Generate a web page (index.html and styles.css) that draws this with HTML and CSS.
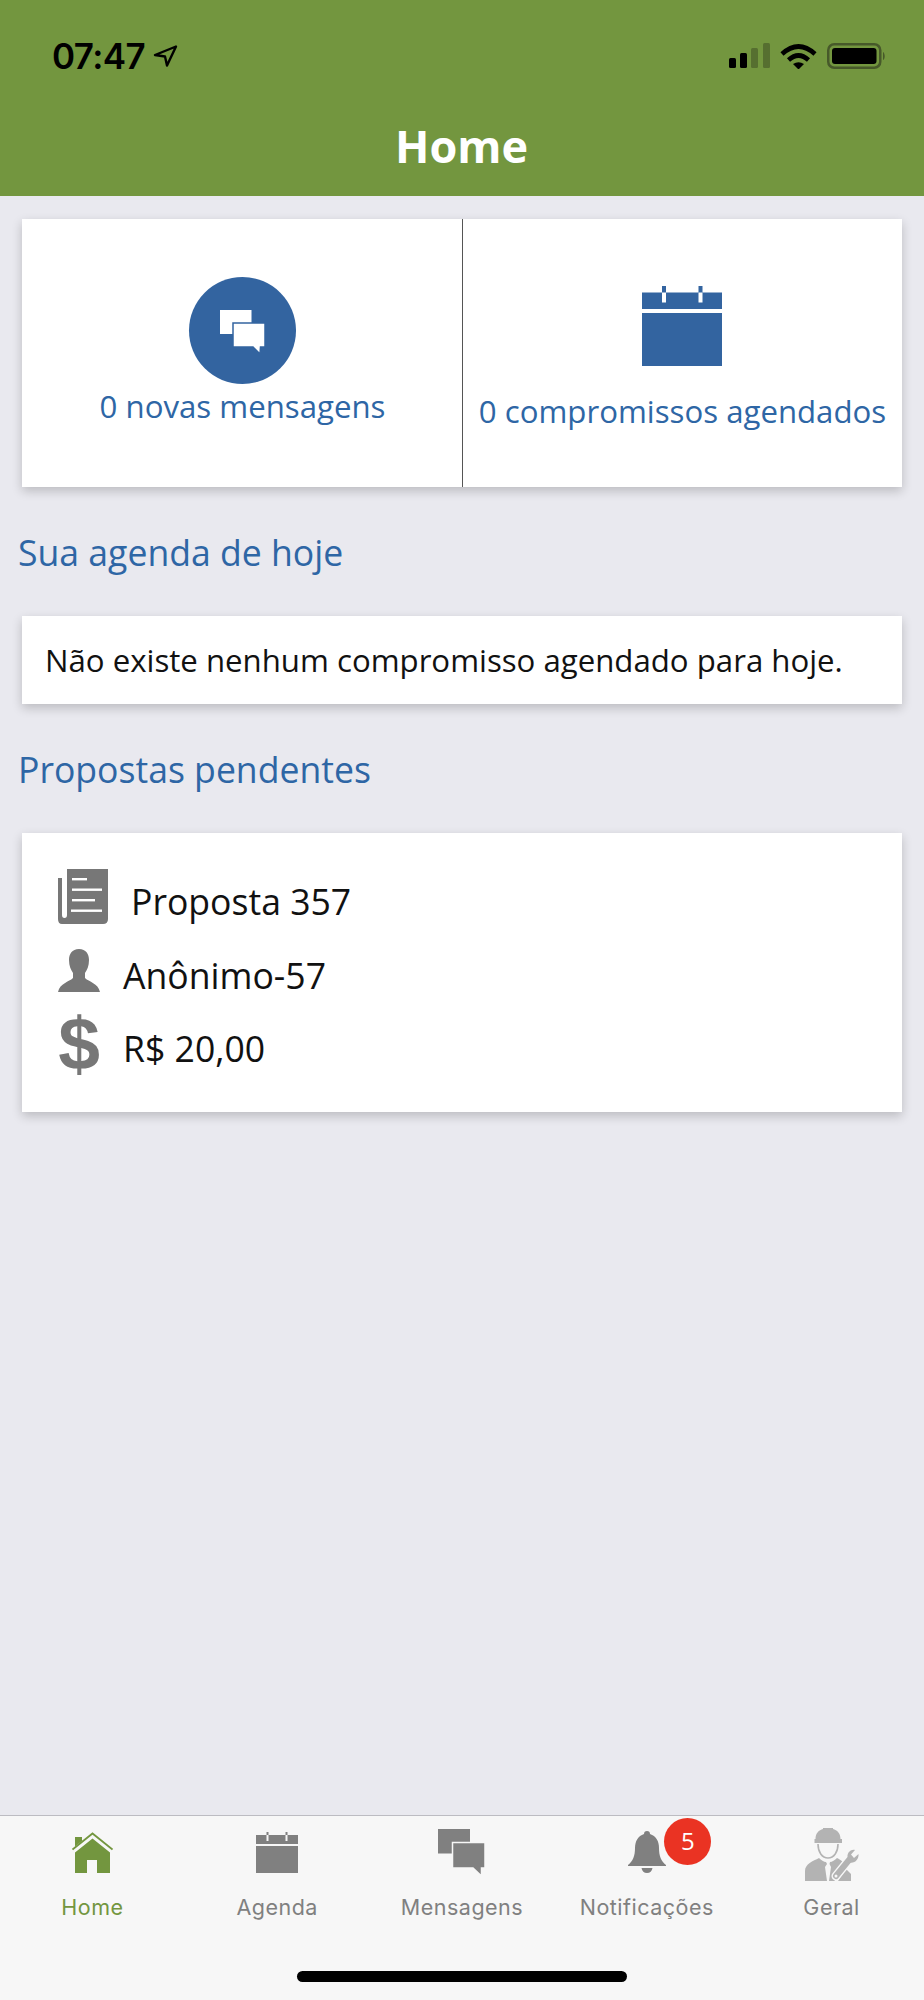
FILE: index.html
```html
<!DOCTYPE html>
<html>
<head>
    <title>Home</title>
    <link rel="stylesheet" href="styles.css">
</head>
<body>
    <header class="top-bar">
        <div class="status-bar">
            <div class="status-time">
                <span>07:47</span>
                <svg class="location-arrow" viewBox="0 0 25 22" width="25" height="22">
                    <path d="M23 1.5 L2 10 L12 11.5 L14 20.5 Z" fill="none" stroke="#000" stroke-width="2.4" stroke-linejoin="round"/>
                </svg>
            </div>
            <div class="status-icons">
                <svg viewBox="0 0 41 25" width="41" height="25">
                    <rect x="0" y="15" width="7" height="10" rx="1.5" fill="#000"/>
                    <rect x="11" y="10" width="7" height="15" rx="1.5" fill="#000"/>
                    <rect x="22" y="5" width="7" height="20" rx="1.5" fill="#566f30"/>
                    <rect x="34" y="0" width="7" height="25" rx="1.5" fill="#566f30"/>
                </svg>
                <svg viewBox="0 0 37 26" width="37" height="26">
                    <path d="M2 11 Q18.5 -4 35 11" fill="none" stroke="#000" stroke-width="4.6"/>
                    <path d="M8.5 17 Q18.5 8 28.5 17" fill="none" stroke="#000" stroke-width="4.6"/>
                    <path d="M13 21 Q18.5 17.5 24 21 L18.5 26.5 Z" fill="#000"/>
                </svg>
                <svg viewBox="0 0 59 26" width="59" height="26">
                    <rect x="1.25" y="1.25" width="52" height="23.5" rx="6" fill="none" stroke="#47592a" stroke-width="2.5"/>
                    <rect x="5" y="5" width="44.5" height="16" rx="3" fill="#000"/>
                    <path d="M56 9 C58 10 58.5 16 56 17 Z" fill="#47592a"/>
                </svg>
            </div>
        </div>
        <h1 class="page-title">Home</h1>
    </header>

    <main class="content">
        <section class="card summary">
            <div class="summary-cell summary-messages">
                <div class="circle-icon">
                    <svg class="chat-icon" viewBox="0 0 45 44" width="45" height="44">
                        <rect x="0" y="0" width="31.5" height="24" fill="#fff"/>
                        <path d="M13 13 H45 V37 H40.5 L40 44 L33 37 H13 Z" fill="#fff" stroke="#3364a0" stroke-width="1.5"/>
                    </svg>
                </div>
                <span class="summary-label">0 novas mensagens</span>
            </div>
            <div class="summary-cell summary-agenda">
                <svg class="calendar-icon" viewBox="0 0 80 80" width="80" height="80">
                    <rect x="0" y="6.5" width="80" height="16.5" fill="#3364a0"/>
                    <rect x="0" y="27" width="80" height="53" fill="#3364a0"/>
                    <rect x="20" y="0" width="4" height="16" fill="#3364a0"/>
                    <rect x="56.5" y="0" width="4" height="16" fill="#3364a0"/>
                    <rect x="20" y="6.5" width="4" height="10" fill="#fff"/>
                    <rect x="56.5" y="6.5" width="4" height="10" fill="#fff"/>
                </svg>
                <span class="summary-label">0 compromissos agendados</span>
            </div>
        </section>

        <h2 class="section-title">Sua agenda de hoje</h2>
        <section class="card empty-note">Não existe nenhum compromisso agendado para hoje.</section>

        <h2 class="section-title">Propostas pendentes</h2>
        <section class="card proposal">
            <div class="proposal-row row-paper">
                <svg class="proposal-icon icon-paper" viewBox="0 0 50 55" width="50" height="55">
                    <path d="M9 0 H50 V50 Q50 55 45 55 H4 Q0 55 0 50 V9 H4 V46 Q4 49 6.5 49 Q9 49 9 46 Z" fill="#777"/>
                    <rect x="14" y="9" width="15" height="2.4" fill="#fff"/>
                    <rect x="14" y="19.5" width="30" height="2.4" fill="#fff"/>
                    <rect x="14" y="30" width="23" height="2.4" fill="#fff"/>
                    <rect x="13" y="40.5" width="31" height="2.4" fill="#fff"/>
                </svg>
                <span class="proposal-text">Proposta 357</span>
            </div>
            <div class="proposal-row row-person">
                <svg class="proposal-icon icon-person" viewBox="0 0 42 43" width="42" height="43">
                    <path d="M21 0 C28 0 31 5 31 11 C31 17 29 21 27 24 L27 29 C31 33 40 34 42 43 L0 43 C2 34 11 33 15 29 L15 24 C13 21 11 17 11 11 C11 5 14 0 21 0 Z" fill="#777"/>
                </svg>
                <span class="proposal-text">Anônimo-57</span>
            </div>
            <div class="proposal-row row-dollar">
                <span class="proposal-icon icon-dollar">$</span>
                <span class="proposal-text">R$ 20,00</span>
            </div>
        </section>
    </main>

    <footer class="tab-bar">
        <nav class="tabs">
            <div class="tab tab-active">
                <div class="tab-icon">
                    <svg viewBox="0 0 41 41" width="41" height="41">
                        <path d="M0.5 17.5 L20.5 1.5 L40.5 17.5" fill="none" stroke="#73963f" stroke-width="1.8"/>
                        <path d="M3 5 H10 V9 L3 14.5 Z" fill="#73963f"/>
                        <path d="M3 20.5 L20.5 6.5 L38 20.5 V41 H25 V28 H15 V41 H3 Z" fill="#73963f"/>
                    </svg>
                </div>
                <span class="tab-label">Home</span>
            </div>
            <div class="tab">
                <div class="tab-icon">
                    <svg viewBox="0 0 42 41" width="42" height="41">
                        <rect x="0" y="3" width="42" height="9" fill="#808080"/>
                        <rect x="0" y="14" width="42" height="27" fill="#808080"/>
                        <rect x="10.5" y="0" width="2" height="9" fill="#808080"/>
                        <rect x="29.5" y="0" width="2" height="9" fill="#808080"/>
                        <rect x="10.5" y="3" width="2" height="6" fill="#f7f7f7"/>
                        <rect x="29.5" y="3" width="2" height="6" fill="#f7f7f7"/>
                    </svg>
                </div>
                <span class="tab-label">Agenda</span>
            </div>
            <div class="tab">
                <div class="tab-icon">
                    <svg viewBox="0 0 47 47" width="47" height="47">
                        <rect x="0" y="0" width="32" height="24.5" fill="#808080"/>
                        <path d="M14.5 13.5 H47 V39 H43.5 V47 L35 39 H14.5 Z" fill="#808080" stroke="#f7f7f7" stroke-width="1.5"/>
                    </svg>
                </div>
                <span class="tab-label">Mensagens</span>
            </div>
            <div class="tab">
                <div class="tab-icon">
                    <svg viewBox="0 0 38 42" width="38" height="42">
                        <path d="M19 0 C21 0 22 1 22 3 C28 5 31 10 31 17 C31 25 33 30 38 34 V35 H0 V34 C5 30 7 25 7 17 C7 10 10 5 16 3 C16 1 17 0 19 0 Z" fill="#808080"/>
                        <path d="M13.5 37 H24.5 C24 40 22 42 19 42 C16 42 14 40 13.5 37 Z" fill="#808080"/>
                    </svg>
                </div>
                <span class="tab-label">Notificações</span>
                <span class="tab-badge">5</span>
            </div>
            <div class="tab">
                <div class="tab-icon tab-icon-worker">
                    <svg viewBox="0 0 54 55" width="54" height="55">
                        <path d="M10.5 12 C10.5 6 14 3 18 2 V1 H28 V2 C32 3 35.5 6 35.5 12 H37 V16 H9.5 V12 Z" fill="#b3b3b3"/>
                        <path d="M13 17 C13 25 17 31 23 31 C29 31 33 25 33 17" fill="none" stroke="#b3b3b3" stroke-width="1.6"/>
                        <path d="M0 54 V44 C0 37 8 34 14 31 C16 33 19 35 21 35 L22 37 L20 40 L22 54 Z" fill="#b3b3b3"/>
                        <path d="M24 54 L26 40 L24.5 37 L25 35 C27 35 30 33 32 31 C34 32 36 33 38 35 L28 50 L30 54 Z" fill="#b3b3b3"/>
                        <path d="M46 54 V47 L41 42 L33 54 Z" fill="#b3b3b3"/>
                        <path d="M31 49 L44 33" fill="none" stroke="#f7f7f7" stroke-width="9" stroke-linecap="round"/>
                        <path d="M31 49 L44 33" fill="none" stroke="#b3b3b3" stroke-width="6" stroke-linecap="round"/>
                        <path d="M43 32 C41 27 45 22 50 23 L46 27.5 L49 31 L53.5 27 C54 32 50 37 44 35.5 Z" fill="#b3b3b3"/>
                        <circle cx="31" cy="49" r="1.5" fill="#f7f7f7"/>
                    </svg>
                </div>
                <span class="tab-label">Geral</span>
            </div>
        </nav>
        <div class="home-indicator"></div>
    </footer>
</body>
</html>
```

FILE: styles.css
```css
html, body {
    height: 100%;
}
body {
    margin: 0;
    display: flex;
    flex-direction: column;
    height: 2000px;
    overflow: hidden;
    background-color: #e9e9ef;
    font-family: "Open Sans", "Liberation Sans", sans-serif;
    color: #111;
}

/* top */
.top-bar {
    height: 196px;
    box-sizing: border-box;
    flex-shrink: 0;
    padding: 42px 38px 0 52px;
    background-color: #73963f;
}
.status-bar {
    display: flex;
    justify-content: space-between;
    align-items: flex-start;
    height: 28px;
}
.status-time {
    display: flex;
    align-items: center;
    gap: 8px;
    font-family: Inter, "Liberation Sans", sans-serif;
    font-size: 35px;
    font-weight: 600;
    line-height: 28px;
    letter-spacing: -0.6px;
    color: #000;
}
.status-icons {
    display: flex;
    gap: 10px;
    padding-top: 1px;
}
.page-title {
    margin: 49px 0 0 -15px;
    text-align: center;
    font-size: 45px;
    font-weight: 700;
    line-height: 54px;
    color: #fff;
}

/* content */
.content {
    flex: 1;
    padding: 23px 22px 0;
}
.card {
    background-color: #fff;
    box-shadow: 0 4px 10px rgba(0, 0, 0, 0.2);
}
.summary {
    display: flex;
    height: 268px;
}
.summary-cell {
    flex: 1;
    display: flex;
    flex-direction: column;
    align-items: center;
    box-sizing: border-box;
}
.summary-messages {
    padding: 58px 0 0 1px;
    border-right: 1px solid #555;
}
.summary-agenda {
    padding-top: 67px;
}
.calendar-icon {
    margin-left: -2px;
}
.circle-icon {
    width: 107px;
    height: 107px;
    display: flex;
    align-items: center;
    justify-content: center;
    border-radius: 50%;
    background-color: #3364a0;
}
.chat-icon {
    margin: 2px 0 0 -1px;
}
.summary-label {
    font-size: 31.2px;
    line-height: 40px;
    color: #2e66a5;
    white-space: nowrap;
}
.summary-messages .summary-label {
    margin-top: 2px;
}
.summary-agenda .summary-label {
    margin-top: 25px;
}
.section-title {
    margin: 44px 0 0 -4px;
    font-size: 35.6px;
    font-weight: 400;
    line-height: 42px;
    color: #2e66a5;
}
.empty-note {
    margin-top: 43px;
    height: 88px;
    box-sizing: border-box;
    padding: 23px 23px 0;
    font-size: 31.2px;
    line-height: 42px;
    white-space: nowrap;
}
.proposal {
    margin-top: 43px;
    height: 279px;
    box-sizing: border-box;
    padding: 36px 36px 0;
}
.proposal-row {
    display: flex;
    align-items: center;
}
.row-paper {
    height: 55px;
    margin-bottom: 25px;
}
.row-person {
    height: 43px;
    margin-bottom: 22px;
}
.row-dollar {
    height: 59px;
}
.proposal-icon {
    flex-shrink: 0;
    display: block;
}
.icon-paper {
    margin-right: 23px;
}
.icon-person {
    margin-right: 23px;
}
.icon-dollar {
    width: 42px;
    height: 59px;
    margin-right: 23px;
    text-align: center;
    font-family: "Liberation Sans", sans-serif;
    font-size: 75px;
    font-weight: 700;
    line-height: 59px;
    color: #777;
}
.proposal-text {
    margin-top: 8px;
    font-size: 35.6px;
    line-height: 30px;
}

/* bottom tabs */
.tab-bar {
    height: 185px;
    box-sizing: border-box;
    flex-shrink: 0;
    border-top: 1px solid #bcbcc2;
    background-color: #f7f7f7;
}
.tabs {
    display: flex;
    height: 155px;
}
.tab {
    position: relative;
    flex: 1;
    display: flex;
    flex-direction: column;
    align-items: center;
}
.tab-icon {
    height: 64px;
    margin-top: 4px;
    display: flex;
    align-items: center;
    justify-content: center;
}
.tab-icon-worker {
    padding-top: 4px;
    box-sizing: border-box;
}
.tab-label {
    margin-top: 10px;
    font-family: Inter, "Liberation Sans", sans-serif;
    font-size: 21.5px;
    letter-spacing: 0.5px;
    line-height: 26px;
    color: #808080;
}
.tab-active .tab-label {
    color: #73963f;
}
.tab-badge {
    position: absolute;
    top: 2px;
    left: 110px;
    width: 47px;
    height: 47px;
    border-radius: 50%;
    background-color: #ea3323;
    color: #fff;
    text-align: center;
    font-size: 24px;
    line-height: 46px;
}
.home-indicator {
    width: 330px;
    height: 11px;
    margin: 0 auto;
    border-radius: 6px;
    background-color: #000;
}
```
